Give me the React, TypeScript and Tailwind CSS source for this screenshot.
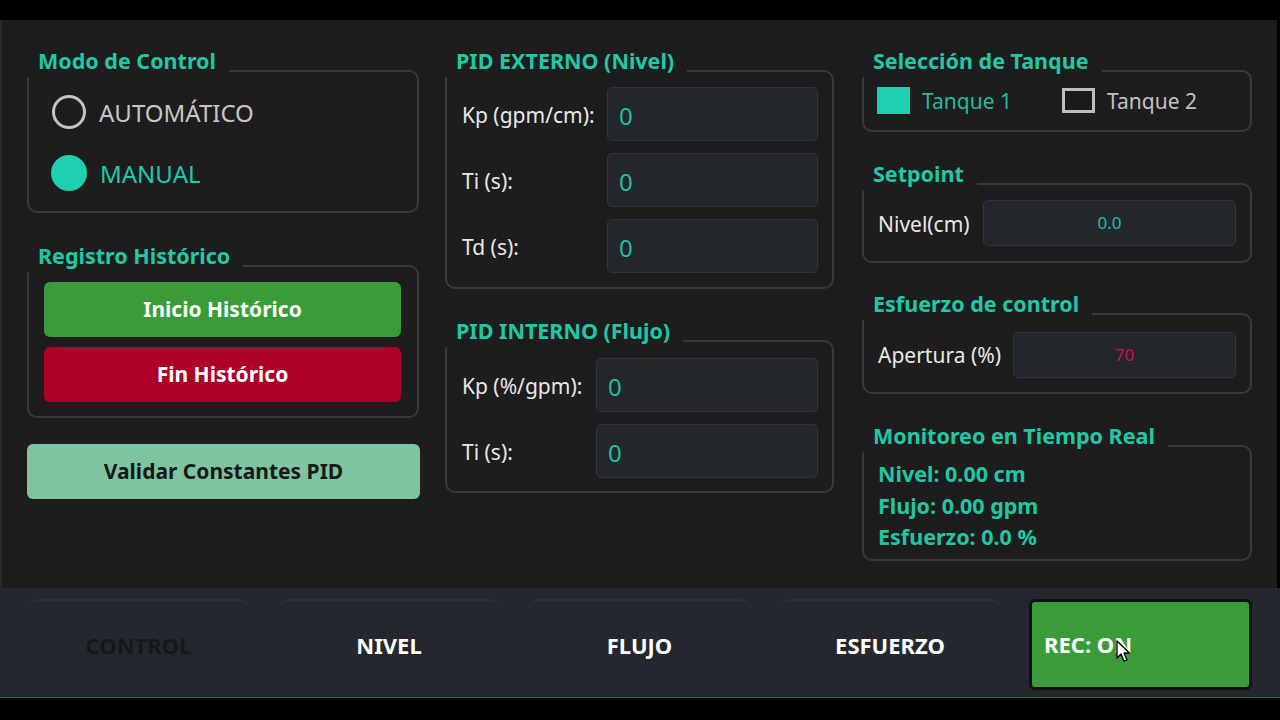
import React from "react";

const FONT = "font-['Noto_Sans','Open_Sans',sans-serif]";

function GroupBox({
  title,
  className,
  children,
}: {
  title: string;
  className?: string;
  children: React.ReactNode;
}) {
  return (
    <div className={`relative border-2 border-[#3a3a3a] rounded-[10px] ${className ?? ""}`}>
      <div className="absolute -left-[2px] top-[-25px] h-[30px] bg-[#1d1d1d] pl-[11px] pr-[13px] text-[21.5px] leading-[27px] font-bold text-[#20c9a6] whitespace-nowrap">
        {title}
      </div>
      {children}
    </div>
  );
}

function Field({ value, className }: { value: string; className?: string }) {
  return (
    <div
      className={`flex items-center bg-[#23272c] border border-[#30353a] rounded-[5px] ${className ?? ""}`}
    >
      {value}
    </div>
  );
}

function Radio({ label, checked }: { label: string; checked?: boolean }) {
  return (
    <div className="flex items-center h-[50px]">
      {checked ? (
        <span className="w-[36px] h-[36px] rounded-full bg-[#1fd0b0] -ml-[1px]" />
      ) : (
        <span className="w-[34px] h-[34px] rounded-full border-[3px] border-[#c4c4c4]" />
      )}
      <span
        className={`ml-[13px] pt-[2px] text-[24px] ${checked ? "text-[#1fc9aa]" : "text-[#c6c6c6]"}`}
      >
        {label}
      </span>
    </div>
  );
}

function PidRow({ label, labelW }: { label: string; labelW: string }) {
  return (
    <div className="flex items-center h-[54px]">
      <span className={`${labelW} pt-[3px] text-[21px] text-[#e8e8e8] shrink-0`}>{label}</span>
      <Field value="0" className="flex-1 h-[54px] pl-[11px] pt-[3px] text-[24px] text-[#1fbf9f]" />
    </div>
  );
}

function Tab({ label, dim }: { label: string; dim?: boolean }) {
  return (
    <div className="w-[223px] h-[91px] border-t-2 border-[#2c3137] rounded-t-[12px] flex items-center justify-center">
      <span className={`text-[22px] font-bold ${dim ? "text-[#16191c]" : "text-white"}`}>
        {label}
      </span>
    </div>
  );
}

export default function App() {
  return (
    <div className={`w-[1280px] h-[720px] bg-black pt-[20px] overflow-hidden ${FONT}`}>
      <div className="w-[1277px] h-[568px] bg-[#1d1d1d] border-l-2 border-[#292929] flex pl-[25px] pt-[50px]">
        {/* left column */}
        <div className="w-[392px] flex flex-col">
          <GroupBox title="Modo de Control" className="h-[143px] pl-[23px] pt-[15px]">
            <div className="flex flex-col gap-[11px]">
              <Radio label="AUTOMÁTICO" />
              <Radio label="MANUAL" checked />
            </div>
          </GroupBox>

          <GroupBox title="Registro Histórico" className="mt-[52px] h-[153px] px-[15px] pt-[15px]">
            <div className="flex flex-col gap-[10px] pr-[1px]">
              <button className="h-[55px] rounded-[6px] bg-[#399c39] text-white text-[21px] font-bold">
                Inicio Histórico
              </button>
              <button className="h-[55px] rounded-[6px] bg-[#ae0029] text-white text-[21px] font-bold">
                Fin Histórico
              </button>
            </div>
          </GroupBox>

          <button className="mt-[26px] h-[55px] w-[393px] rounded-[6px] bg-[#7fc4a0] text-[#161a18] text-[21px] font-bold">
            Validar Constantes PID
          </button>
        </div>

        {/* middle column */}
        <div className="w-[389px] ml-[26px] flex flex-col">
          <GroupBox title="PID EXTERNO (Nivel)" className="h-[219px] pl-[15px] pr-[14px] pt-[15px]">
            <div className="flex flex-col gap-[12px]">
              <PidRow label="Kp (gpm/cm):" labelW="w-[145px]" />
              <PidRow label="Ti (s):" labelW="w-[145px]" />
              <PidRow label="Td (s):" labelW="w-[145px]" />
            </div>
          </GroupBox>

          <GroupBox title="PID INTERNO (Flujo)" className="mt-[51px] h-[153px] pl-[15px] pr-[14px] pt-[16px]">
            <div className="flex flex-col gap-[12px]">
              <PidRow label="Kp (%/gpm):" labelW="w-[134px]" />
              <PidRow label="Ti (s):" labelW="w-[134px]" />
            </div>
          </GroupBox>
        </div>

        {/* right column */}
        <div className="w-[390px] ml-[28px] flex flex-col">
          <GroupBox title="Selección de Tanque" className="h-[62px] pl-[13px] pt-[15px]">
            <div className="flex items-center h-[27px]">
              <div className="w-[185px] flex items-center">
                <span className="w-[33px] h-[27px] bg-[#1fd0b0]" />
                <span className="ml-[12px] pt-[2px] text-[21px] text-[#24b99c]">Tanque 1</span>
              </div>
              <div className="flex items-center">
                <span className="w-[33px] h-[25px] border-[3px] border-[#bdbdbd] bg-[#1a1a1a]" />
                <span className="ml-[12px] pt-[2px] text-[21px] text-[#c2c2c2]">Tanque 2</span>
              </div>
            </div>
          </GroupBox>

          <GroupBox title="Setpoint" className="mt-[51px] h-[80px] pl-[14px] pr-[14px] pt-[15px]">
            <div className="flex items-center h-[46px]">
              <span className="w-[105px] shrink-0 pt-[3px] text-[21px] text-[#e8e8e8]">Nivel(cm)</span>
              <Field value="0.0" className="flex-1 h-[46px] justify-center text-[17px] text-[#1fbf9f]" />
            </div>
          </GroupBox>

          <GroupBox title="Esfuerzo de control" className="mt-[50px] h-[81px] pl-[14px] pr-[14px] pt-[17px]">
            <div className="flex items-center h-[46px]">
              <span className="w-[135px] shrink-0 pt-[2px] text-[21px] text-[#e8e8e8]">Apertura (%)</span>
              <Field value="70" className="flex-1 h-[46px] justify-center text-[17px] text-[#c4164a]" />
            </div>
          </GroupBox>

          <GroupBox title="Monitoreo en Tiempo Real" className="mt-[51px] h-[116px] pl-[14px] pt-[11px]">
            <div className="flex flex-col text-[21.5px] font-bold text-[#21c7a3] leading-[31.5px]">
              <span>Nivel: 0.00 cm</span>
              <span>Flujo: 0.00 gpm</span>
              <span>Esfuerzo: 0.0 %</span>
            </div>
          </GroupBox>
        </div>
      </div>

      {/* bottom bar */}
      <div className="h-[110px] bg-[#24282e] border-b border-[#2d6e2d] flex gap-[27.5px] pl-[27px] pt-[11px]">
        <Tab label="CONTROL" dim />
        <Tab label="NIVEL" />
        <Tab label="FLUJO" />
        <Tab label="ESFUERZO" />
        <div className="relative w-[223px] h-[91px] rounded-[6px] border-[3px] border-[#101210] bg-[#399c39] flex items-center pl-[12px]">
          <span className="text-[22px] font-bold text-white">REC: ON</span>
          <svg
            className="absolute left-[84px] top-[38px]"
            width="16"
            height="24"
            viewBox="0 0 16 24"
          >
            <path
              d="M1 1 L1 18 L5 14 L8 21 L11 20 L8 13 L13.5 13 Z"
              fill="#ffffff"
              stroke="#000000"
              strokeWidth="1.3"
              strokeLinejoin="round"
            />
          </svg>
        </div>
      </div>
    </div>
  );
}
